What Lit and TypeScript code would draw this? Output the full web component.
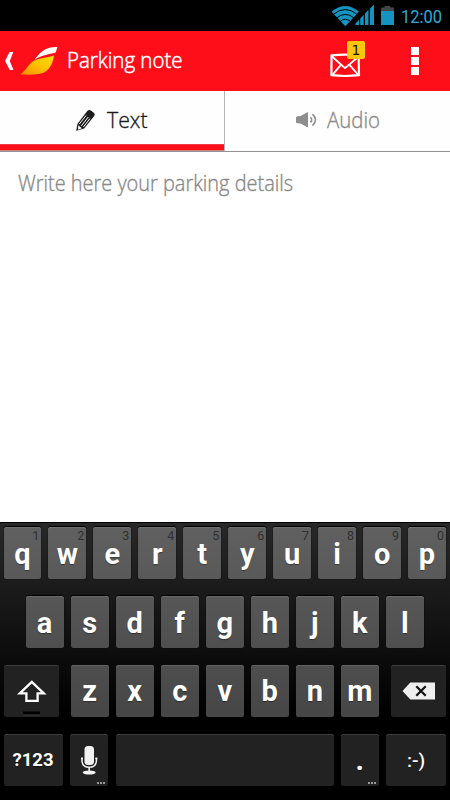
import { LitElement, html, svg, css, nothing } from "lit";
import { customElement, property } from "lit/decorators.js";

/** A line of text condensed to a fixed run length. */
@customElement("fitted-text")
class FittedText extends LitElement {
  @property() text = "";
  @property({ type: Number }) run = 100;
  static styles = css`
    :host { display: block; }
    svg { display: block; overflow: visible; fill: currentColor; stroke: currentColor; stroke-width: var(--heft, 0.35px); }
  `;
  render() {
    return html`<svg width=${this.run} height="30" role="img" aria-label=${this.text}>
      <text x="0" y="22" textLength=${this.run} lengthAdjust="spacingAndGlyphs">${this.text}</text>
    </svg>`;
  }
}

@customElement("status-bar")
class StatusBar extends LitElement {
  static styles = css`
    :host { display: flex; justify-content: flex-end; height: 31px; background: #000;
      font: 18.5px Roboto, sans-serif; }
    svg { display: block; }
    .clock { --heft: 0; width: 41px; margin: 0.5px 8px 0 6px; color: #2fa9d6; }
  `;
  render() {
    return html`
      <svg width="64" height="31" viewBox="332 0 64 31">
        <path d="M332.6 11.8Q346.3 0 360 11.8L346.3 26.2z" fill="#1494c0" />
        <g fill="none" stroke="#000" stroke-width="1">
          <path d="M334 14.6Q346.3 4.4 358.6 14.6" />
          <path d="M337.2 18.2Q346.3 10.6 355.4 18.2" />
          <path d="M340.6 21.8Q346.3 16.6 352 21.8" />
        </g>
        <path d="M356.5 25v-1.6l3.5-3.6V25zM361.2 25v-6.6l3.5-3.7V25zM366 25V13.4l3.5-3.6V25zM371 25V8.5l4-4V25z" fill="#1494c0" />
        <path d="M382 7.5h3.6V6h5.8v1.5h3.6v4h-13z" fill="#444" />
        <rect x="382" y="11" width="13" height="14" fill="#1494c0" />
      </svg>
      <fitted-text class="clock" text="12:00" run="41"></fitted-text>
    `;
  }
}

@customElement("title-bar")
class TitleBar extends LitElement {
  static styles = css`
    :host { display: flex; height: 60px; background: #fd0e18; color: #fff;
      font: 300 21.5px "Open Sans", "Noto Sans", sans-serif; }
    svg { display: block; flex: none; }
    .title { margin: 14.5px 0 0; flex: 1; --heft: 0.5px; }
    .mail { position: relative; width: 36px; height: 60px; margin-right: 45px; }
    .badge { position: absolute; left: 17px; top: 10px; width: 18px; height: 18px; border-radius: 2px;
      background: #ffc60a; color: #171300; text-align: center; font: 500 14px/18px "DejaVu Sans", sans-serif; }
    .more { display: grid; gap: 2px; align-content: start; padding: 16px 31px 0 0; }
    .more i { width: 8px; height: 8px; background: #fff; }
  `;
  render() {
    return html`
      <svg width="67" height="60" viewBox="0 31 67 60">
        <defs>
          <linearGradient id="leaf" x1="0" y1="1" x2="1" y2="0">
            <stop offset="0" stop-color="#f28a00" /><stop offset=".55" stop-color="#ffc400" /><stop offset="1" stop-color="#ffe000" />
          </linearGradient>
        </defs>
        <path d="M9.6 52h3.7L9.8 61l3.7 9H9.8L5 61z" fill="#fff" />
        <path d="M20 74.6C26.5 70.5 28 63.5 34.5 60.5C41 57.6 48 58 54 55.3C53 63 50 70 43 73C36 75.4 27 74.4 20 74.6z" fill="url(#leaf)" />
        <path d="M34.5 59.8C40 53 44.5 46.6 57.4 47L55.7 52.4C48.5 54.2 41 55.2 34.5 59.8z" fill="#fff" />
      </svg>
      <fitted-text class="title" text="Parking note" run="115.5"></fitted-text>
      <div class="mail">
        <svg width="36" height="60" viewBox="330 31 36 60" fill="none" stroke="#fff" stroke-width="2.2" stroke-linejoin="round">
          <path d="M331.5 55.4Q345 54 358.6 55.4L359 75.2Q345 76.8 331.4 75.2z" />
          <path d="M332 56.5l13 11.6 13.4-11.4M332.3 75l8.8-10.4M358.3 75l-9-10.4" stroke-width="1.9" />
        </svg>
        <span class="badge">1</span>
      </div>
      <div class="more"><i></i><i></i><i></i></div>
    `;
  }
}

@customElement("note-tabs")
class NoteTabs extends LitElement {
  static styles = css`
    :host { display: flex; height: 61px; box-sizing: border-box; border-bottom: 1px solid #929292; background: #fefefe;
      font: 300 21.5px "Open Sans", "Noto Sans", sans-serif; }
    .tab { display: flex; box-sizing: border-box; height: 60px; width: 225px; color: #888; }
    .on { color: #1c1c1c; border-right: 1px solid #b4b4b4; background: linear-gradient(#fefefe 53px, #dc6668 53px, #fd0e18 54px, #fd0e18 59px, #d78080 59px); }
    svg { display: block; flex: none; }
    fitted-text { margin-top: 14.5px; }
  `;
  render() {
    return html`
      <div class="tab on">
        <svg width="107" height="53" viewBox="0 91 107 53">
          <path d="M76.2 130.7l1.3-7 9.8-12.6q1.6-2 3.6-.7l2.9 2.3q1.8 1.5.4 3.4l-10 12.3z" fill="#1c1c1c" />
          <path d="M79.2 124.2l6.9-8.7M81.3 125.9l7-8.9M83.4 127l6.5-8.4" stroke="#fff" stroke-width="1" fill="none" />
          <path d="M78.2 125.3l3.7 3-3.8 1.5z" fill="#fff" />
        </svg>
        <fitted-text text="Text" run="40.5"></fitted-text>
      </div>
      <div class="tab">
        <svg width="101.5" height="60" viewBox="225 91 101.5 60">
          <path d="M296 117.6q0-1.2 1.4-1.3l3.2-.2 6.2-3.6q1.2-.5 1.2.6v13.4q0 1.1-1.2.6l-6.2-3.6-3.2-.2q-1.4 0-1.4-1.3z" fill="#8e8e8e" />
          <path d="M310.5 117.2q2.4 2.6 0 5.2M312.5 114.2q6 5.6 0 11.4" fill="none" stroke="#8e8e8e" stroke-width="1.6" />
        </svg>
        <fitted-text text="Audio" run="53"></fitted-text>
      </div>
    `;
  }
}

const shiftIcon = svg`
  <path d="M15.8 28.4L27.8 16.9 39.8 28.4H33.6v7.5H22.4v-7.5z" fill="none" stroke="#fff" stroke-width="2.3" />
  <rect x="19" y="46.5" width="17" height="3" fill="#000" /><rect x="19" y="49.5" width="17" height="1" fill="#343434" />`;
const micIcon = svg`
  <rect x="14.5" y="12" width="9.5" height="19" rx="3.5" fill="#f2f2f2" />
  <path d="M12 24v3q.5 6.3 7.2 6.3t7.2-6.3v-3" fill="none" stroke="#f2f2f2" stroke-width="1.5" />
  <path d="M11 24.4h2M25.4 24.4h2M19.2 33v4" stroke="#f2f2f2" stroke-width="1.6" />
  <ellipse cx="19.2" cy="38.5" rx="6.5" ry="2" fill="#f2f2f2" />`;
const deleteIcon = svg`
  <path d="M11.5 26l7.8-8.5H44v17H19.3z" fill="#efefef" />
  <path d="M25.3 21.2l9.4 9.6M34.7 21.2l-9.4 9.6" stroke="#111" stroke-width="2.2" />`;

@customElement("soft-keyboard")
class SoftKeyboard extends LitElement {
  static styles = css`
    :host { display: flex; flex-direction: column; gap: 17px; box-sizing: border-box; height: 278px; padding: 4px 4px 0 3.5px;
      border-top: 1px solid #000; background: linear-gradient(#282828, #171717 30%, #080808 55%, #000 70%);
      color: #fff; font: bold 29px Roboto, sans-serif; }
    .row { display: flex; justify-content: center; gap: 7.15px; height: 52px; }
    .row.edge, .row.r1 { justify-content: space-between; gap: 0; }
    .group { display: flex; gap: 7.15px; }
    .key { position: relative; box-sizing: border-box; width: 37.9px; height: 52px; border-radius: 2.5px; flex: none;
      text-align: center; line-height: 53px; text-shadow: 0 1px 1px #0006;
      background: #555; box-shadow: 0 -1px 1px #000, 0 0 1px #000, inset 0 1px #717171; }
    .r1 .key { background: linear-gradient(#606060, #595959); line-height: 55px; }
    .r2 .key { background: linear-gradient(#575757, #4f4f4f); box-shadow: 0 -1px 1px #000, 0 0 1px #000, inset 0 1px #696969; line-height: 54px; }
    .r3 .key { background: linear-gradient(#4e4e4e, #464646); box-shadow: inset 0 1px #626262; }
    .row .dark { background: #222; box-shadow: inset 0 1px #3d3d3d; }
    .wide { width: 55px; }
    .sym { width: 59px; font-size: 18.5px; }
    .space { width: 218px; margin-left: 0.6px; }
    .smile { width: 60px; font-size: 19px; font-weight: 500; }
    .hint { position: absolute; right: 2px; top: 1px; font: 12.5px/15px Roboto, sans-serif; color: #303030; text-shadow: none; }
    .dots { position: absolute; right: 3px; bottom: 2px; display: flex; gap: 1px; }
    .dots i { width: 2px; height: 2px; background: #999; }
    svg { display: block; }
  `;
  key(label: string, hint = "") {
    return html`<div class="key">${label}${hint ? html`<span class="hint">${hint}</span>` : nothing}</div>`;
  }
  render() {
    const dots = html`<span class="dots"><i></i><i></i><i></i></span>`;
    return html`
      <div class="row r1">${[..."qwertyuiop"].map((c, i) => this.key(c, String((i + 1) % 10)))}</div>
      <div class="row r2">${[..."asdfghjkl"].map((c) => this.key(c))}</div>
      <div class="row r3 edge">
        <div class="key dark wide"><svg width="55" height="52">${shiftIcon}</svg></div>
        <div class="group">${[..."zxcvbnm"].map((c) => this.key(c))}</div>
        <div class="key dark wide"><svg width="55" height="52">${deleteIcon}</svg></div>
      </div>
      <div class="row edge">
        <div class="key dark sym">?123</div>
        <div class="key dark"><svg width="38" height="52">${micIcon}</svg>${dots}</div>
        <div class="key dark space"></div>
        <div class="key dark">.${dots}</div>
        <div class="key dark smile">:-)</div>
      </div>
    `;
  }
}

@customElement("app-root")
class AppRoot extends LitElement {
  static styles = css`
    :host { display: flex; flex-direction: column; width: 450px; height: 800px; overflow: hidden; background: #fff; }
    .note { flex: 1; padding: 17px 18px; color: #888; font: 300 21.5px "Open Sans", "Noto Sans", sans-serif; background: #fff; }
  `;
  render() {
    return html`
      <status-bar></status-bar>
      <title-bar></title-bar>
      <note-tabs></note-tabs>
      <div class="note"><fitted-text text="Write here your parking details" run="275"></fitted-text></div>
      <soft-keyboard></soft-keyboard>
    `;
  }
}
